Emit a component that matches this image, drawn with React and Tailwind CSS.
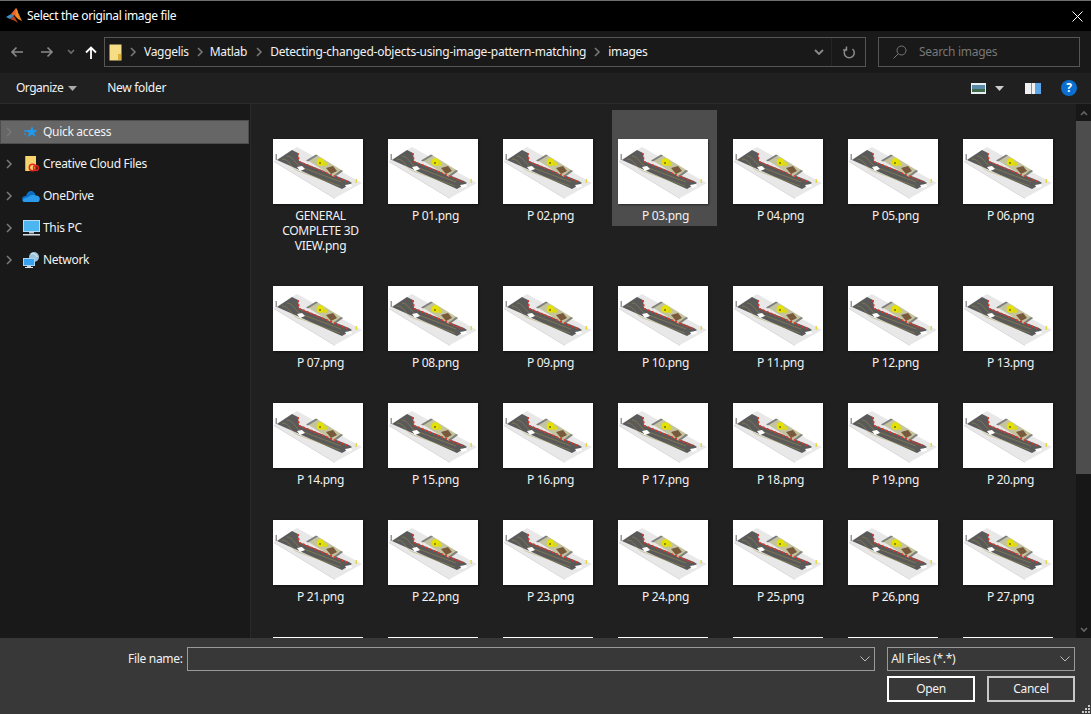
const files = [
    'GENERAL COMPLETE 3D VIEW.png',
    ...Array.from({ length: 27 }, (_, i) => `P ${String(i + 1).padStart(2, '0')}.png`),
];

// last row only peeks out above the footer
const peekRow = [1, 2, 3, 4, 5, 6, 7];

const navItems = [
    { name: 'Quick access', icon: <StarIcon />, selected: true },
    { name: 'Creative Cloud Files', icon: <CloudFilesIcon /> },
    { name: 'OneDrive', icon: <OneDriveIcon /> },
    { name: 'This PC', icon: <PcIcon /> },
    { name: 'Network', icon: <NetworkIcon /> },
];

function Chevron({ className, d = 'M3 2l4 4-4 4' }) {
    return (
        <svg className={className} width="10" height="12" viewBox="0 0 10 12" fill="none" stroke="currentColor" strokeWidth="1.6">
            <path d={d} />
        </svg>
    );
}

function MatlabIcon() {
    return (
        <svg width="17" height="16" viewBox="0 0 17 16">
            <polygon points="0,9 5,6 8,8 4,11" fill="#3f8fc4" />
            <polygon points="5,6 10,0 12,3 8,8" fill="#e8622a" />
            <polygon points="10,0 16,13 12,11 9,8" fill="#f08a24" />
            <polygon points="4,11 8,8 12,15 9,13" fill="#b8401c" />
        </svg>
    );
}

function StarIcon() {
    return (
        <svg width="14" height="14" viewBox="0 0 14 14">
            <polygon points="8,1 9.4,5 13.5,5.2 10.2,7.8 11.4,12 8,9.6 3.6,12 5.2,7.8 1,5.2 6.4,5" fill="#1e9bf0" />
            <path d="M0 6h3M0 9h2" stroke="#1e9bf0" strokeWidth="1" />
        </svg>
    );
}

function CloudFilesIcon() {
    return (
        <svg width="16" height="18" viewBox="0 0 16 18">
            <rect x="2" y="1" width="11" height="15" fill="#f6d46b" />
            <rect x="2" y="1" width="1" height="15" fill="#d8a428" />
            <circle cx="9.5" cy="12.5" r="3.2" fill="none" stroke="#e5261f" strokeWidth="1.5" />
            <circle cx="13" cy="13" r="2.5" fill="none" stroke="#e5261f" strokeWidth="1.5" />
        </svg>
    );
}

function OneDriveIcon() {
    return (
        <svg width="18" height="12" viewBox="0 0 18 12">
            <path d="M1 11C-1 8 1 5.500 4 6 5 2 8 0 11 1.500 12.500 2.200 13 3.500 13.500 5 L7 11Z" fill="#0c6fc6" />
            <path d="M2 12C0.500 12 0 10 1.500 9 3 8 5 7.500 7 6.500 9 4.800 12 4 14 5.500 17 5.500 18.500 8 17.500 10.500 17 11.500 16.500 12 15.500 12Z" fill="#2a9bea" />
        </svg>
    );
}

function PcIcon() {
    return (
        <svg width="17" height="16" viewBox="0 0 17 16">
            <rect x="0.500" y="0.500" width="16" height="11" fill="#4db5f0" stroke="#b8dcf2" />
            <rect x="6" y="12" width="5" height="1.500" fill="#b9c3cc" />
            <rect x="0" y="14" width="17" height="1.500" fill="#d5dce2" />
        </svg>
    );
}

function NetworkIcon() {
    return (
        <svg width="17" height="16" viewBox="0 0 17 16">
            <circle cx="11" cy="5" r="5" fill="#9cc3dc" />
            <path d="M8 2c2-1 5 0 6 3" stroke="#e8f3fa" strokeWidth="1" fill="none" />
            <rect x="0.500" y="6.500" width="11" height="7" fill="#38a3ec" stroke="#a9d6f2" />
            <rect x="4" y="14" width="4" height="1" fill="#c5ced6" />
            <rect x="2" y="15" width="8" height="1" fill="#dfe5ea" />
        </svg>
    );
}

// little 3D render of the road, same picture in every thumbnail
function RoadPicture({ heavy }) {
    return (
        <svg className="blur-[0.5px]" width="90" height="65" viewBox="0 0 90 65">
            <polygon points="1,22 24,8 89,44 62,59" fill="#e8e8e8" />
            <polygon points="1,22 62,59 62,60 1,23" fill="#d4d4d4" />
            <polygon points="4,21 19,11 25,14 26,22 76,42 79,44 69,50" fill="#5a5a5a" />
            <polygon points="34,21 44,16 70,32 61,38" fill="#c4c4a0" />
            <polygon points="33,21.500 43,15.500 45,16.500 35,22.500" fill="#808080" />
            <polygon points="60,37 68,31 70,32 62,38" fill="#808080" />
            <polygon points="53,29 60,27 64,32 58,35" fill="#7a5a3c" />
            <circle cx="47.500" cy="23" r="3.800" fill="#e6e200" />
            <circle cx="52" cy="25" r="2.200" fill="#dcd820" />
            <circle cx="47" cy="24" r="1" fill="#6f6f20" />
            <path d="M25 14l1 8.500L75.500 43" fill="none" stroke="#e0352b" strokeWidth={heavy ? 1.700 : 1.400} strokeDasharray="2.200 2" />
            <path d="M9 20c8 0 8 9 16 12l42 15M14 17c6 0 8 8 14 11l40 15" fill="none" stroke="#a89a44" strokeWidth="0.450" />
            <polygon points="24,28 29,27 32,30 27,32" fill="#fff" />
            <polygon points="72,46 78,45 79,47.500 74,49" fill="#fff" />
            <rect x="2.500" y="15" width="1.500" height="6" fill="#999" />
            <rect x="82.500" y="40" width="1.500" height="4" fill="#e6d84a" />
        </svg>
    );
}

function FileCell({ name, index }) {
    const selected = name === 'P 03.png';
    return (
        <div className={`w-[105px] pt-[29px] pb-[3px] ${selected ? 'bg-[#4d4d4d]' : ''}`}>
            <div className="ml-[6px] h-[65px] w-[90px] bg-white shadow-[1px_1px_2px_rgba(0,0,0,0.5)]">
                <RoadPicture heavy={index > 6} />
            </div>
            <div className="mt-[4px] pr-[5px] pl-[7px] text-center text-[12px] leading-[15px] tracking-[-0.3px] text-[#f2f2f2]">{name}</div>
        </div>
    );
}

export default function App() {
    return (
        <div className="flex h-[714px] w-[1091px] flex-col overflow-hidden bg-[#202020] font-['Noto_Sans',sans-serif] text-[12px] text-[#f2f2f2]">
            {/* Title bar */}
            <div className="flex h-[31px] shrink-0 items-center border-t border-[#6e6e6e] bg-black pr-[8px] pl-[6px]">
                <MatlabIcon />
                <span className="ml-[4px] tracking-[-0.35px] text-white">Select the original image file</span>
                <svg className="ml-auto" width="11" height="11" viewBox="0 0 11 11" stroke="#fff" strokeWidth="1">
                    <path d="M0.500 0.500l10 10M10.500 0.500l-10 10" />
                </svg>
            </div>

            {/* Address bar */}
            <div className="flex h-[42px] shrink-0 items-center bg-[#191919] pr-[11px] pl-[10px]">
                <svg width="14" height="12" viewBox="0 0 14 12" fill="none" stroke="#8a8a8a" strokeWidth="1.600">
                    <path d="M13 6H2M6.500 1.500L2 6l4.500 4.500" />
                </svg>
                <svg className="ml-[16px]" width="14" height="12" viewBox="0 0 14 12" fill="none" stroke="#8a8a8a" strokeWidth="1.600">
                    <path d="M1 6h11M7.500 1.500L12 6l-4.500 4.500" />
                </svg>
                <svg className="ml-[13px]" width="8" height="6" viewBox="0 0 8 6" fill="none" stroke="#6e6e6e" strokeWidth="1.600">
                    <path d="M1 1l3 3 3-3" />
                </svg>
                <svg className="ml-[10px]" width="12" height="13" viewBox="0 0 12 13" fill="none" stroke="#fff" strokeWidth="1.800">
                    <path d="M6 13V2M1 6.500L6 1.500l5 5" />
                </svg>
                <div className="ml-[7px] flex h-[30px] w-[762px] items-center border border-[#555] pl-[4px]">
                    <svg width="13" height="17" viewBox="0 0 13 17">
                        <rect x="0.500" y="0.500" width="12" height="16" fill="#f7dc86" />
                        <rect x="9" y="10" width="3" height="6" fill="#d8b040" />
                    </svg>
                    <Chevron className="ml-[6px] text-[#777]" />
                    <span className="ml-[6px] tracking-[-0.3px]">Vaggelis</span>
                    <Chevron className="ml-[6px] text-[#777]" />
                    <span className="ml-[5px] tracking-[-0.3px]">Matlab</span>
                    <Chevron className="ml-[7px] text-[#777]" />
                    <span className="ml-[6px] tracking-[-0.23px]">Detecting-changed-objects-using-image-pattern-matching</span>
                    <Chevron className="ml-[6px] text-[#777]" />
                    <span className="ml-[6px] tracking-[-0.3px]">images</span>
                    <svg className="ml-auto" width="10" height="6" viewBox="0 0 10 6" fill="none" stroke="#8a8a8a" strokeWidth="1.800">
                        <path d="M1 1l4 4 4-4" />
                    </svg>
                    <div className="ml-[7px] flex h-full w-[34px] items-center justify-center border-l border-[#252525]">
                        <svg width="12" height="13" viewBox="0 0 12 13" fill="none" stroke="#8a8a8a" strokeWidth="1.500">
                            <path d="M3 3a5 5 0 1 0 6.500 0M3.500 0.500V4H0" />
                        </svg>
                    </div>
                </div>
                <div className="ml-[12px] flex h-[30px] w-[202px] items-center border border-[#555] pl-[14px] text-[#777]">
                    <svg width="14" height="14" viewBox="0 0 14 14" fill="none" stroke="#777" strokeWidth="1">
                        <circle cx="8.500" cy="5.500" r="4.500" />
                        <path d="M5 9l-4.500 4.500" />
                    </svg>
                    <span className="ml-[12px] tracking-[-0.3px]">Search images</span>
                </div>
            </div>

            {/* Toolbar */}
            <div className="flex h-[31px] shrink-0 items-center border-b border-[#2b2b2b] bg-[#202020] pr-[14px] pl-[16px]">
                <span className="tracking-[-0.5px]">Organize</span>
                <svg className="ml-[5px]" width="9" height="5" viewBox="0 0 9 5"><path d="M0 0h9L4.500 5z" fill="#aaa" /></svg>
                <span className="ml-[30px] tracking-[-0.3px]">New folder</span>
                <svg className="ml-auto" width="15" height="11" viewBox="0 0 15 11">
                    <rect width="15" height="11" fill="#e8eef2" />
                    <rect x="1" y="2" width="13" height="4" fill="#5a8aa8" />
                    <rect x="1" y="6" width="13" height="3" fill="#3f6a4c" />
                </svg>
                <svg className="ml-[9px]" width="9" height="5" viewBox="0 0 9 5"><path d="M0 0h9L4.500 5z" fill="#ccc" /></svg>
                <svg className="ml-[21px]" width="16" height="11" viewBox="0 0 16 11">
                    <rect width="16" height="11" fill="#f0f0f0" />
                    <rect x="6" width="1" height="11" fill="#8a8a8a" />
                    <rect x="10" width="6" height="11" fill="#5aa6e6" />
                </svg>
                <div className="ml-[20px] flex h-[16px] w-[16px] items-center justify-center rounded-full bg-[#0a6fd0] text-[12px] leading-none font-bold text-white">?</div>
            </div>

            {/* Body */}
            <div className="flex min-h-0 flex-1">
                <div className="w-[250px] shrink-0 bg-[#191919] pt-[16px]">
                    {navItems.map((item) => (
                        <div
                            key={item.name}
                            className={`mb-[8px] flex h-[24px] w-[249px] items-center border pl-[3px] ${item.selected ? 'border-[#4d4d4d] bg-[#666]' : 'border-transparent'}`}
                        >
                            <Chevron className="text-[#777]" />
                            <div className="flex w-[29px] justify-center pl-[5px]">{item.icon}</div>
                            <span className="tracking-[-0.3px]">{item.name}</span>
                        </div>
                    ))}
                </div>
                <div className="w-[1px] shrink-0 bg-[#2a2a2a]" />
                <div className="min-w-0 flex-1 overflow-hidden pt-[6px] pl-[16px]">
                    <div className="grid grid-cols-[repeat(7,105px)] items-start gap-x-[10px] gap-y-[1px]">
                        {files.map((name, i) => (
                            <FileCell key={name} name={name} index={i} />
                        ))}
                        {peekRow.map((n) => (
                            <div key={n} className="w-[105px] pt-[29px]">
                                <div className="ml-[6px] h-[65px] w-[90px] bg-white" />
                            </div>
                        ))}
                    </div>
                </div>
                {/* Scrollbar */}
                <div className="flex w-[15px] shrink-0 flex-col bg-[#171717]">
                    <div className="flex h-[17px] items-center justify-center">
                        <svg width="8" height="6" viewBox="0 0 8 6" fill="none" stroke="#666" strokeWidth="1.600"><path d="M1 5l3-3 3 3" /></svg>
                    </div>
                    <div className="h-[353px] bg-[#4d4d4d]" />
                    <div className="mt-auto flex h-[17px] items-center justify-center">
                        <svg width="8" height="6" viewBox="0 0 8 6" fill="none" stroke="#666" strokeWidth="1.600"><path d="M1 1l3 3 3-3" /></svg>
                    </div>
                </div>
            </div>

            {/* File name and buttons */}
            <div className="relative h-[76px] shrink-0 bg-[#383838] pt-[9px] pr-[16px] pl-[128px]">
                <div className="flex h-[24px] items-center">
                    <span className="w-[59px] shrink-0 tracking-[-0.3px]">File name:</span>
                    <div className="flex h-full w-[689px] items-center justify-end border border-[#9a9a9a] pr-[4px]">
                        <svg width="10" height="6" viewBox="0 0 10 6" fill="none" stroke="#bbb" strokeWidth="1"><path d="M0.500 0.500L5 5l4.500-4.500" /></svg>
                    </div>
                    <div className="ml-[12px] flex h-full w-[188px] items-center justify-between border border-[#9a9a9a] pr-[4px] pl-[3px]">
                        <span className="tracking-[-0.3px]">All Files (*.*)</span>
                        <svg width="10" height="6" viewBox="0 0 10 6" fill="none" stroke="#bbb" strokeWidth="1"><path d="M0.500 0.500L5 5l4.500-4.500" /></svg>
                    </div>
                </div>
                <div className="mt-[5px] flex justify-end gap-[12px]">
                    <button className="h-[26px] w-[88px] border-2 border-white tracking-[-0.3px]">Open</button>
                    <button className="h-[26px] w-[88px] border-2 border-[#c8c8c8] tracking-[-0.3px]">Cancel</button>
                </div>
                <svg className="absolute right-0 bottom-0" width="10" height="10" viewBox="0 0 10 10" fill="#c8c8c8">
                    <rect x="7" y="1" width="2" height="2" />
                    <rect x="4" y="4" width="2" height="2" />
                    <rect x="7" y="4" width="2" height="2" />
                    <rect x="1" y="7" width="2" height="2" />
                    <rect x="4" y="7" width="2" height="2" />
                    <rect x="7" y="7" width="2" height="2" />
                </svg>
            </div>
        </div>
    );
}
